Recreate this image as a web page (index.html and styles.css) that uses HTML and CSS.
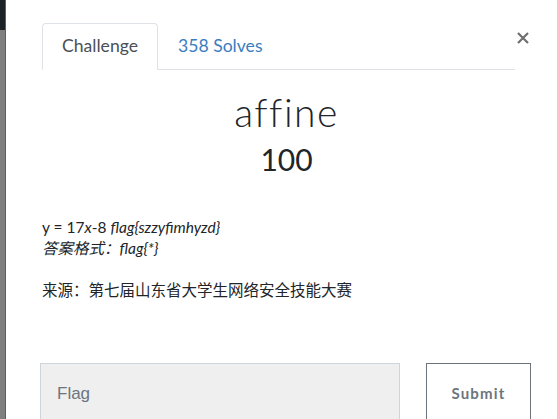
FILE: index.html
```html
<!DOCTYPE html>
<html>
<head>
<meta charset="utf-8">
<link rel="stylesheet" href="styles.css">
</head>
<body>
<div class="page">
  <div class="backdrop"><div class="backdrop-top"></div></div>
  <div class="modal">
    <div class="header">
      <ul class="tabs">
        <li class="tab active">Challenge</li>
        <li class="tab link">358 Solves</li>
      </ul>
      <button class="close" aria-label="Close">
        <svg width="12" height="12" viewBox="0 0 12 12"><path d="M1 1 L11 11 M11 1 L1 11" stroke="#6f6f6f" stroke-width="2.2" stroke-linecap="butt"/></svg>
      </button>
    </div>
    <h3 class="name">affine</h3>
    <h4 class="value">100</h4>
    <div class="desc">
      <p class="math">y = 17<i>x</i>-8 <i>flag{szzyfimhyzd}</i><br><i>答案格式：flag{*}</i></p>
      <p class="src">来源：第七届山东省大学生网络安全技能大赛</p>
    </div>
    <form class="answer">
      <input class="flag" type="text" placeholder="Flag">
      <button type="button" class="submit">Submit</button>
    </form>
  </div>
</div>
</body>
</html>
```
FILE: styles.css
```css
html, body {
  margin: 0;
  padding: 0;
  background: #fff;
  height: 100%;
  overflow: hidden;
}
.page {
  display: flex;
  height: 419px;
  font-family: Lato, "Noto Sans CJK SC", sans-serif;
  color: #212529;
}
.backdrop {
  width: 5px;
  background: #7f7f7f;
  border-right: 1px solid #5e5e5e;
  flex: none;
}
.backdrop-top {
  height: 30px;
  background: #1c2226;
}
.modal {
  flex: 1;
  padding: 23px 29px 0 36px;
  display: flex;
  flex-direction: column;
}
.header {
  display: flex;
  align-items: flex-start;
}
.tabs {
  list-style: none;
  margin: 0;
  padding: 0;
  display: flex;
  width: 473px;
  border-bottom: 1px solid #dee2e6;
}
.tab {
  font-size: 17.6px;
  line-height: 24px;
  padding: 10px 19px 11px 19px;
  margin-bottom: -1px;
  border: 1px solid transparent;
  border-radius: 4px 4px 0 0;
}
.tab.active {
  color: #495057;
  background: #fff;
  border-color: #dee2e6 #dee2e6 #fff;
}
.tab.link {
  color: #3a7dbf;
  padding-left: 19px;
}
.close {
  border: 0;
  background: none;
  padding: 0;
  margin: 9px 0 0 2px;
  width: 12px;
  height: 12px;
  display: flex;
}
.name {
  margin: 19px 0 0 0;
  text-align: center;
  font-weight: 300;
  font-size: 39px;
  line-height: 46px;
  letter-spacing: 1.5px;
}
.value {
  margin: 4px 0 0 0;
  text-align: center;
  font-weight: 400;
  font-size: 30px;
  line-height: 40px;
}
.desc {
  margin: 38px 0 0 0;
  font-size: 15.5px;
  line-height: 21px;
}
.desc p {
  margin: 0;
}
.desc .src {
  margin-top: 21px;
}
.answer {
  margin: 62px 0 0 -2px;
  display: flex;
  gap: 26px;
}
.flag {
  width: 360px;
  height: 62px;
  box-sizing: border-box;
  background: #efefef;
  border: 1px solid #cfd4d8;
  padding: 0 16px;
  font-family: "Liberation Sans", Arial, sans-serif;
  font-size: 17px;
  margin: 0;
  outline: none;
}
.flag::placeholder {
  color: #6c757d;
}
.submit {
  width: 105px;
  height: 62px;
  background: #fff;
  border: 1px solid #6c757d;
  font-family: Lato, sans-serif;
  font-weight: 700;
  font-size: 15px;
  letter-spacing: 1.2px;
  color: #6c757d;
  padding: 0 0 2px 0;
  margin: 0;
}
```
